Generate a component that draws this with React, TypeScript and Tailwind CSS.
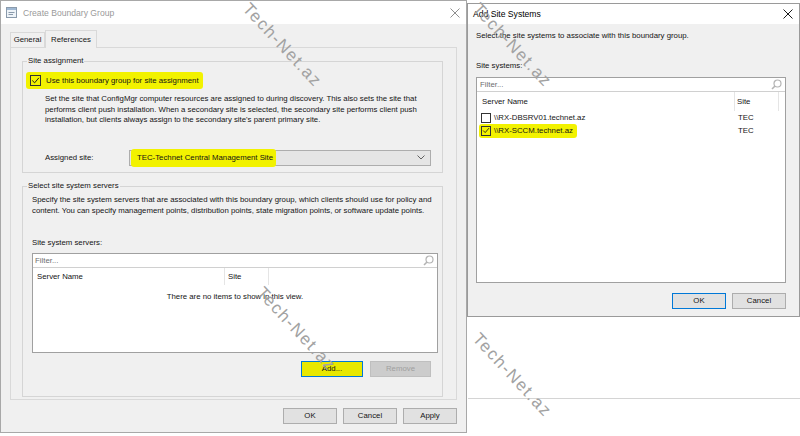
import React from 'react';

const ui = "font-['Liberation_Sans',Arial,sans-serif] text-[7.8px] leading-[10px] text-[#141414]";

function CloseX({ color }: { color: string }) {
  return (
    <svg width="10" height="10" viewBox="0 0 10 10">
      <path d="M0.5 0.5 L9.5 9.5 M9.5 0.5 L0.5 9.5" stroke={color} strokeWidth="1" fill="none" />
    </svg>
  );
}

function FormIcon() {
  return (
    <svg width="11" height="11" viewBox="0 0 11 11">
      <rect x="0.5" y="0.5" width="10" height="10" fill="#eef3f8" stroke="#8a9aab" />
      <rect x="1" y="1" width="9" height="2" fill="#9fb8d3" />
      <path d="M2.5 5.5 H8.5 M2.5 7.5 H7" stroke="#8a9aab" strokeWidth="1" />
    </svg>
  );
}

function Magnifier() {
  return (
    <svg width="11" height="11" viewBox="0 0 11 11">
      <circle cx="6.5" cy="4.5" r="3.5" fill="none" stroke="#b4b4b4" strokeWidth="1.2" />
      <path d="M4 7 L1 10" stroke="#b4b4b4" strokeWidth="1.6" />
    </svg>
  );
}

function CheckBox({ checked, size }: { checked?: boolean; size: 'lg' | 'sm' }) {
  return (
    <span
      className={`flex items-center justify-center shrink-0 border border-[#333] ${
        size === 'lg' ? 'w-[11px] h-[11px]' : 'w-[10px] h-[10px]'
      } ${checked ? 'bg-transparent' : 'bg-white'}`}
    >
      {checked && (
        <svg viewBox="0 0 10 10" className="w-[9px] h-[9px]">
          <path d="M1.4 5 L4 7.6 L8.8 2" fill="none" stroke="#1a1a1a" strokeWidth="1.1" />
        </svg>
      )}
    </span>
  );
}

function Btn({
  label,
  w,
  kind = 'normal',
}: {
  label: string;
  w: string;
  kind?: 'normal' | 'default' | 'disabled' | 'marked';
}) {
  const look =
    kind === 'default'
      ? 'bg-[#e1e1e1] border-[#0078d7] text-[#141414]'
      : kind === 'disabled'
      ? 'bg-[#cccccc] border-[#bfbfbf] text-[#a0a0a0]'
      : kind === 'marked'
      ? 'bg-[#e8e800] border-[#0078d7] text-[#141414]'
      : 'bg-[#e1e1e1] border-[#adadad] text-[#141414]';
  return <div className={`h-[16px] border flex items-center justify-center ${w} ${look}`}>{label}</div>;
}

function GroupBox({ title, className, children }: { title: string; className: string; children: React.ReactNode }) {
  return (
    <div className={`relative border border-[#d5d5d5] shrink-0 ${className}`}>
      <span className="absolute left-[4px] -top-[6px] px-[1px] bg-[#f0f0f0] leading-[10px]">{title}</span>
      {children}
    </div>
  );
}

// diagonal site watermark stamped over the screenshot
function Watermark({ className }: { className: string }) {
  return (
    <span
      className={`absolute pointer-events-none origin-top-left rotate-[47deg] whitespace-nowrap font-['Liberation_Sans',sans-serif] text-[17px] leading-[17px] tracking-[1.5px] text-[#a2a2a2] ${className}`}
    >
      Tech-Net.az
    </span>
  );
}

function CreateBoundaryGroup() {
  return (
    <div className="absolute left-0 top-0 w-[467px] h-[433px] bg-[#f0f0f0] border border-[#a8a8a8] flex flex-col">
      <div className="h-[23px] bg-white flex items-center pl-[5px] pr-[6px] shrink-0">
        <FormIcon />
        <span className="ml-[6px] text-[8.6px] text-[#9a9a9a]">Create Boundary Group</span>
        <span className="ml-auto flex">
          <CloseX color="#8f8f8f" />
        </span>
      </div>

      <div className="flex flex-col px-[9px]">
        <div className="mt-[6px] h-[17px] flex items-end">
          <div className="h-[15px] w-[35px] border border-b-0 border-[#d9d9d9] bg-[#f0f0f0] flex items-center justify-center">
            General
          </div>
          <div className="relative z-10 -mb-px h-[18px] w-[52px] border border-b-0 border-[#d9d9d9] bg-[#f0f0f0] flex items-center justify-center">
            References
          </div>
        </div>

        <div className="h-[353px] border border-[#d9d9d9] bg-[#f0f0f0] pt-[13px] pl-[11px] pr-[13px] flex flex-col">
          <GroupBox title="Site assignment" className="h-[112px] flex flex-col">
            <div className="mt-[10px] ml-[3px] self-start h-[17px] pl-[4px] pr-[4px] flex items-center bg-[#f2f200] rounded-[3px]">
              <CheckBox checked size="lg" />
              <span className="ml-[5px]">Use this boundary group for site assignment</span>
            </div>
            <div className="mt-[5px] ml-[22px] leading-[10.5px]">
              <div>Set the site that ConfigMgr computer resources are assigned to during discovery. This also sets the site that</div>
              <div>performs client push installation. When a secondary site is selected, the secondary site performs client push</div>
              <div>installation, but clients always assign to the secondary site's parent primary site.</div>
            </div>
            <div className="mt-[24px] ml-[22px] flex items-center">
              <span className="w-[84px]">Assigned site:</span>
              <div className="w-[302px] h-[16px] border border-[#adadad] bg-[#e5e5e5] flex items-center pl-[1px] pr-[5px]">
                <span className="bg-[#f2f200] pl-[6px] pr-[3px] py-[4px] rounded-[3px]">TEC-Technet Central Management Site</span>
                <svg className="ml-auto" width="8" height="5" viewBox="0 0 8 5">
                  <path d="M0.5 0.5 L4 4 L7.5 0.5" stroke="#606060" fill="none" strokeWidth="1" />
                </svg>
              </div>
            </div>
          </GroupBox>

          <GroupBox title="Select site system servers" className="mt-[13px] h-[211px] flex flex-col">
            <div className="mt-[8px] ml-[9px] leading-[10.5px]">
              <div>Specify the site system servers that are associated with this boundary group, which clients should use for policy and</div>
              <div>content. You can specify management points, distribution points, state migration points, or software update points.</div>
            </div>
            <div className="mt-[22px] ml-[9px]">Site system servers:</div>
            <div className="mt-[5px] ml-[9px] w-[406px] h-[100px] border border-[#a0a0a0] bg-white flex flex-col">
              <div className="h-[14px] border-b border-[#d0d0d0] flex items-center pl-[2px] pr-[3px] shrink-0">
                <span className="text-[#6d6d6d]">Filter...</span>
                <span className="ml-auto flex">
                  <Magnifier />
                </span>
              </div>
              <div className="h-[17px] flex items-center shrink-0">
                <div className="w-[192px] h-full flex items-center pl-[4px] border-r border-[#e5e5e5]">Server Name</div>
                <div className="w-[44px] h-full flex items-center pl-[3px] border-r border-[#e5e5e5]">Site</div>
              </div>
              <div className="mt-[7px] text-center">There are no items to show in this view.</div>
            </div>
            <div className="mt-[8px] pr-[11px] flex justify-end gap-[7px]">
              <Btn label="Add..." w="w-[62px]" kind="marked" />
              <Btn label="Remove" w="w-[61px]" kind="disabled" />
            </div>
          </GroupBox>
        </div>

        <div className="mt-[8px] flex justify-end gap-[6px]">
          <Btn label="OK" w="w-[54px]" />
          <Btn label="Cancel" w="w-[54px]" />
          <Btn label="Apply" w="w-[54px]" />
        </div>
      </div>
    </div>
  );
}

function AddSiteSystems() {
  const rows = [
    { name: '\\\\RX-DBSRV01.technet.az', site: 'TEC', checked: false },
    { name: '\\\\RX-SCCM.technet.az', site: 'TEC', checked: true },
  ];
  return (
    <div className="absolute left-[467px] top-[3px] w-[333px] h-[314px] bg-[#f0f0f0] border border-[#9a9a9a] flex flex-col">
      <div className="h-[20px] bg-white flex items-center pl-[5px] pr-[6px] shrink-0">
        <span className="text-[8.6px] text-black">Add Site Systems</span>
        <span className="ml-auto flex">
          <CloseX color="#1a1a1a" />
        </span>
      </div>
      <div className="flex flex-col pl-[8px] pr-[13px]">
        <div className="mt-[7px]">Select the site systems to associate with this boundary group.</div>
        <div className="mt-[20px]">Site systems:</div>
        <div className="mt-[6px] h-[206px] border border-[#a0a0a0] bg-white flex flex-col">
          <div className="h-[14px] border-b border-[#d0d0d0] flex items-center pl-[3px] pr-[3px] shrink-0">
            <span className="text-[#6d6d6d]">Filter...</span>
            <span className="ml-auto flex">
              <Magnifier />
            </span>
          </div>
          <div className="h-[19px] flex items-center shrink-0">
            <div className="w-[258px] h-full flex items-center pl-[5px] border-r border-[#e5e5e5]">Server Name</div>
            <div className="w-[44px] h-full flex items-center pl-[2px] border-r border-[#e5e5e5]">Site</div>
          </div>
          {rows.map((r) => (
            <div key={r.name} className="h-[13px] flex items-center">
              <div className="w-[259px] pl-[4px] flex items-center">
                <span
                  className={`flex items-center ${
                    r.checked ? 'bg-[#f2f200] -ml-[2px] pl-[2px] pr-[4px] py-[2px] -my-[2px] rounded-[3px]' : ''
                  }`}
                >
                  <CheckBox checked={r.checked} size="sm" />
                  <span className="ml-[3px]">{r.name}</span>
                </span>
              </div>
              <div className="pl-[2px]">{r.site}</div>
            </div>
          ))}
        </div>
        <div className="mt-[10px] flex justify-end gap-[6px]">
          <Btn label="OK" w="w-[54px]" kind="default" />
          <Btn label="Cancel" w="w-[54px]" />
        </div>
      </div>
    </div>
  );
}

export default function App() {
  return (
    <div className={`relative w-[800px] h-[436px] overflow-hidden bg-white ${ui}`}>
      <CreateBoundaryGroup />
      <div className="absolute left-[468px] top-[398px] w-[332px] h-px bg-[#d4d4d4]" />
      <AddSiteSystems />
      <Watermark className="left-[252px] top-[0px]" />
      <Watermark className="left-[482px] top-[0px]" />
      <Watermark className="left-[266px] top-[284px]" />
      <Watermark className="left-[482px] top-[330px]" />
    </div>
  );
}
